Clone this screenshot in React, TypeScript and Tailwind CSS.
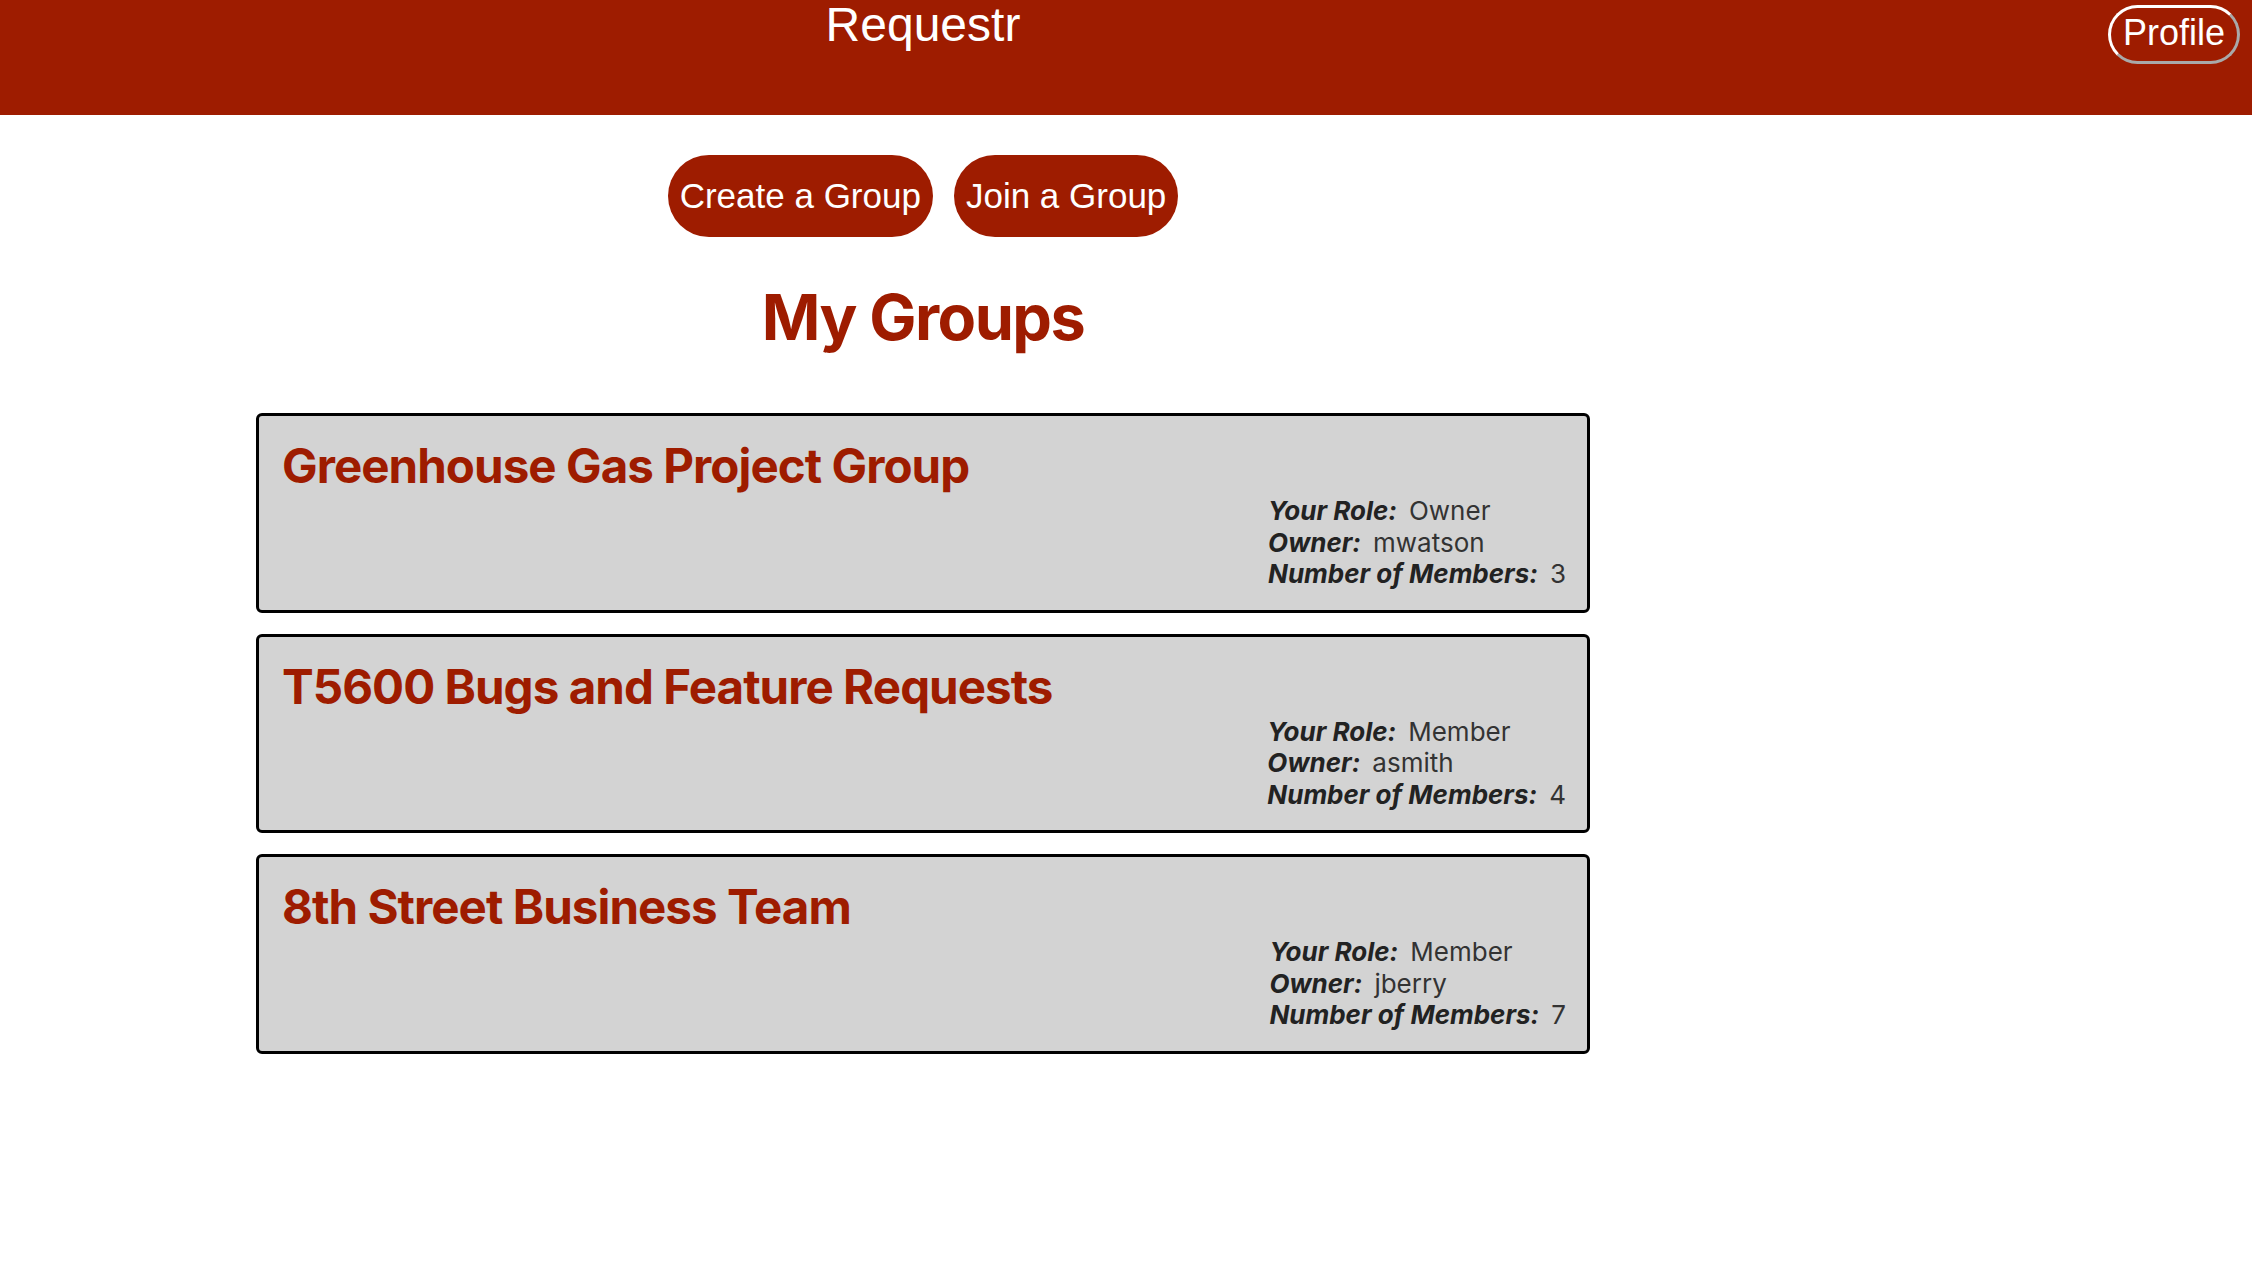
const groups = [
  { name: "Greenhouse Gas Project Group", role: "Owner", owner: "mwatson", members: 3 },
  { name: "T5600 Bugs and Feature Requests", role: "Member", owner: "asmith", members: 4 },
  { name: "8th Street Business Team", role: "Member", owner: "jberry", members: 7 },
];

const sans = "font-['Liberation_Sans',Arial,sans-serif]";
const inter = "font-['Inter','Noto_Sans',sans-serif]";

function GroupCard({ name, role, owner, members }: (typeof groups)[number]) {
  return (
    <div className="w-[1334px] rounded-md border-[3px] border-black bg-[#d3d3d3] pt-[21px] pl-[23px] pr-[21px] pb-5">
      <h2 className={`${inter} text-[47.5px] leading-[58px] font-bold tracking-[-0.02em] text-[#9e1c00]`}>{name}</h2>
      <div className={`${inter} ml-auto w-fit text-[26px] leading-[31.5px] text-[#333]`}>
        <div>
          <span className="mr-3 font-bold italic text-[#222]">Your Role:</span>
          {role}
        </div>
        <div>
          <span className="mr-3 font-bold italic text-[#222]">Owner:</span>
          {owner}
        </div>
        <div>
          <span className="mr-3 font-bold italic text-[#222]">Number of Members:</span>
          {members}
        </div>
      </div>
    </div>
  );
}

export default function App() {
  return (
    <div className="min-h-screen bg-white">
      <header className="flex h-[115px] items-start bg-[#9e1c00]">
        <div className="w-[1846px] text-center">
          <h1 className={`${sans} -mt-[3px] text-[48px] leading-[55px] text-white`}>Requestr</h1>
        </div>
        <div className="flex flex-1 justify-end pt-[5px] pr-3">
          <button
            className={`${sans} h-[59px] w-[132px] rounded-full border-[3px] border-t-white border-l-white border-r-[#a9a9a9] border-b-[#a9a9a9] pb-[4px] text-[36px] leading-none text-white`}
          >
            Profile
          </button>
        </div>
      </header>

      <main className="flex w-[1846px] flex-col items-center">
        <div className="mt-10 flex gap-[21px]">
          <button className={`${sans} h-[82px] rounded-full bg-[#9e1c00] px-3 text-[35px] text-white`}>
            Create a Group
          </button>
          <button className={`${sans} h-[82px] rounded-full bg-[#9e1c00] px-3 text-[35px] text-white`}>
            Join a Group
          </button>
        </div>

        <h1 className={`${inter} mt-[42px] text-[63px] leading-[76px] font-bold tracking-tight text-[#9e1c00]`}>
          My Groups
        </h1>

        <div className="mt-[58px] flex flex-col gap-[21px]">
          {groups.map((g) => (
            <GroupCard key={g.name} {...g} />
          ))}
        </div>
      </main>
    </div>
  );
}
